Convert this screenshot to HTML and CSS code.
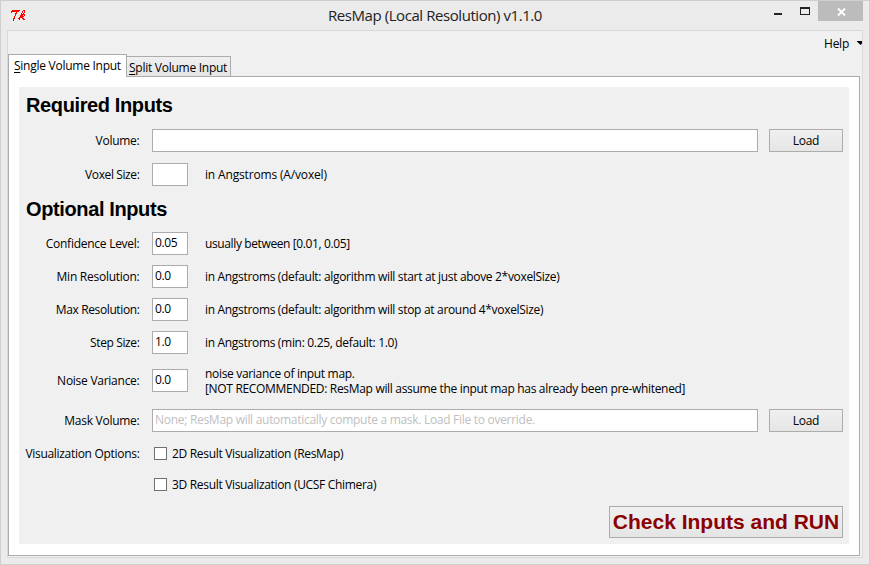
FILE: index.html
```html
<!DOCTYPE html>
<html lang="en">
<head>
<meta charset="utf-8">
<title>ResMap (Local Resolution) v1.1.0</title>
<link rel="stylesheet" href="styles.css">
</head>
<body>
<div class="window">
  <header class="titlebar">
    <svg class="tk" width="16" height="13" viewBox="0 0 16 13" fill="#f00" shape-rendering="crispEdges"><path d="M2 1h8v1h-8zM1 2h8v1h-8zM1 3h1v1h-1zM6 3h1v2h-1zM5 4h1v3h-1zM5 6h1v1h-1zM4 7h1v2h-1zM3 9h1v3h-1zM4 9h1v1h-1zM13 1h2v1h-2zM12 2h1v2h-1zM14 2h1v2h-1zM11 4h1v2h-1zM13 4h1v1h-1zM12 5h3v1h-3zM10 6h3v1h-3zM14 6h1v1h-1zM10 7h4v1h-4zM9 8h4v1h-4zM9 9h1v2h-1zM12 9h2v1h-2zM8 9h1v1h-1zM13 10h2v1h-2z"/></svg>
    <h1 class="title">ResMap (Local Resolution) v1.1.0</h1>
    <div class="controls">
      <span class="min"></span>
      <span class="max"></span>
      <span class="close"><svg width="9" height="8" viewBox="0 0 9 8" stroke="#fff" stroke-width="1.9"><path d="M1 .5L8 7.500M8 .5L1 7.500"/></svg></span>
    </div>
  </header>
  <main class="client">
    <nav class="menubar"><span class="help">Help</span><svg class="arrow" width="5" height="4" viewBox="0 0 5 4"><path d="M0 0H6V1L3.500 4L0 .5Z" fill="#000"/></svg></nav>
    <div class="tabs">
      <div class="tab active"><u>S</u>ingle Volume Input</div>
      <div class="tab"><u>S</u>plit Volume Input</div>
    </div>
    <section class="pane">
      <form class="panel">
        <h2>Required Inputs</h2>
        <label class="label">Volume:</label>
        <div class="field"></div>
        <button class="load" type="button">Load</button>

        <label class="label tight">Voxel Size:</label>
        <div class="line"><div class="field small"></div><span class="loose">in Angstroms (A/voxel)</span></div>

        <h2>Optional Inputs</h2>
        <label class="label">Confidence Level:</label>
        <div class="line"><div class="field small tight">0.05</div><span class="tight">usually between [0.01, 0.05]</span></div>

        <label class="label">Min Resolution:</label>
        <div class="line"><div class="field small">0.0</div><span>in Angstroms (default: algorithm will start at just above 2*voxelSize)</span></div>

        <label class="label tight">Max Resolution:</label>
        <div class="line"><div class="field small">0.0</div><span>in Angstroms (default: algorithm will stop at around 4*voxelSize)</span></div>

        <label class="label tight">Step Size:</label>
        <div class="line"><div class="field small">1.0</div><span>in Angstroms (min: 0.25, default: 1.0)</span></div>

        <label class="label">Noise Variance:</label>
        <div class="line"><div class="field small">0.0</div><span class="note">noise variance of input map.<br>[NOT RECOMMENDED: ResMap will assume the input map has already been pre-whitened]</span></div>

        <label class="label">Mask Volume:</label>
        <div class="field hint">None; ResMap will automatically compute a mask. Load File to override.</div>
        <button class="load" type="button">Load</button>

        <label class="label full">Visualization Options:</label>
        <div class="check"><span class="box"></span><span>2D Result Visualization (ResMap)</span></div>
        <div class="check"><span class="box"></span><span>3D Result Visualization (UCSF Chimera)</span></div>

        <button class="run" type="button">Check Inputs and RUN</button>
      </form>
    </section>
  </main>
</div>
</body>
</html>
```
FILE: styles.css
```css
* { box-sizing: border-box; }
body { margin: 0; font: 12px/15px "Open Sans", sans-serif; letter-spacing: -.32px; color: #000; }
.window { width: 870px; height: 565px; border: 1px solid #cfcfcf; background: #ebebeb; padding: 0 6px; }

.titlebar { height: 29px; display: flex; position: relative; }
.tk { margin: 8px 0 0 3px; }
.title { margin: 0; position: absolute; left: 0; right: 0; top: 4px; text-align: center; font: 15px/20px "Open Sans", sans-serif; letter-spacing: -.43px; color: #222; }
.controls { margin-left: auto; display: flex; }
.min { width: 8px; height: 2px; background: #222; margin: 12px 18px 0 0; }
.max { width: 10px; height: 8px; border: 1px solid #222; border-top-width: 2px; margin: 6px 8px 0 0; }
.close { width: 45px; height: 20px; background: #bcbcbc; display: flex; align-items: center; justify-content: center; padding: 1px 0 0 1px; }

.client { width: 856px; height: 528px; border: 1px solid #d9d9d9; background: #f0f0f0; }
.menubar { height: 23px; display: flex; justify-content: flex-end; padding-top: 5px; letter-spacing: -.25px; }
.arrow { margin: 5px 0 0 8px; }

.tabs { height: 22px; display: flex; align-items: flex-end; }
.tab { height: 21px; margin-bottom: -1px; border: 1px solid #acacac; border-left: 0; background: linear-gradient(#f0f0f0, #e5e5e5); padding: 3px 3px 0 2px; letter-spacing: -.26px; white-space: nowrap; width: 104px; }
.tab.active { height: 23px; width: 119px; padding: 3px 5px 0; border-left: 1px solid #acacac; border-bottom: 0; background: #fff; position: relative; }
u { text-underline-offset: 2px; text-decoration-thickness: 1px; }

.pane { width: 852px; height: 480px; border: 1px solid #acacac; background: #fff; padding: 10px; }
.panel { width: 830px; height: 457px; background: #f0f0f0; padding: 0 6px 0 7px; display: grid; grid-template-columns: 114px 606px 74px; column-gap: 12px; grid-template-rows: 37px 33px 35px 35px 33px 33px 33px 33px 43px 37px 29px 33px 42px; align-items: center; }
h2 { grid-column: 1 / -1; margin: -2px 0 0; font: bold 20px/24px "Liberation Sans", sans-serif; letter-spacing: -.38px; }
.label { grid-column: 1; justify-self: end; white-space: nowrap; letter-spacing: -.26px; margin-right: .5px; }
.label.full { letter-spacing: -.3px; }
.field { height: 23px; border: 1px solid #acacac; background: #fff; padding: 2px 2px 0; white-space: nowrap; }
.small { width: 36px; flex: none; }
.line { display: flex; align-items: center; gap: 17px; grid-column: 2 / -1; white-space: nowrap; }
.tight, .label.tight { letter-spacing: -.38px; }
.loose { letter-spacing: -.16px; }
.hint { color: #c0c0c0; letter-spacing: -.29px; }
button { border: 1px solid #acacac; border-radius: 0; background: linear-gradient(#f0f0f0, #e5e5e5); padding: 0; letter-spacing: -.31px; }
.load { width: 74px; height: 23px; margin-left: -1px; font: 12px/15px "Open Sans", sans-serif; }
.check { grid-column: 2 / -1; display: flex; align-items: center; gap: 5px; padding-left: 2px; }
.box { width: 13px; height: 13px; border: 1px solid #707070; background: #fff; }
.run { grid-column: 2 / -1; justify-self: end; width: 234px; height: 32px; margin-right: 1px; font: bold 21px/28px "Liberation Sans", sans-serif; letter-spacing: 0; color: #8b0000; }
```
